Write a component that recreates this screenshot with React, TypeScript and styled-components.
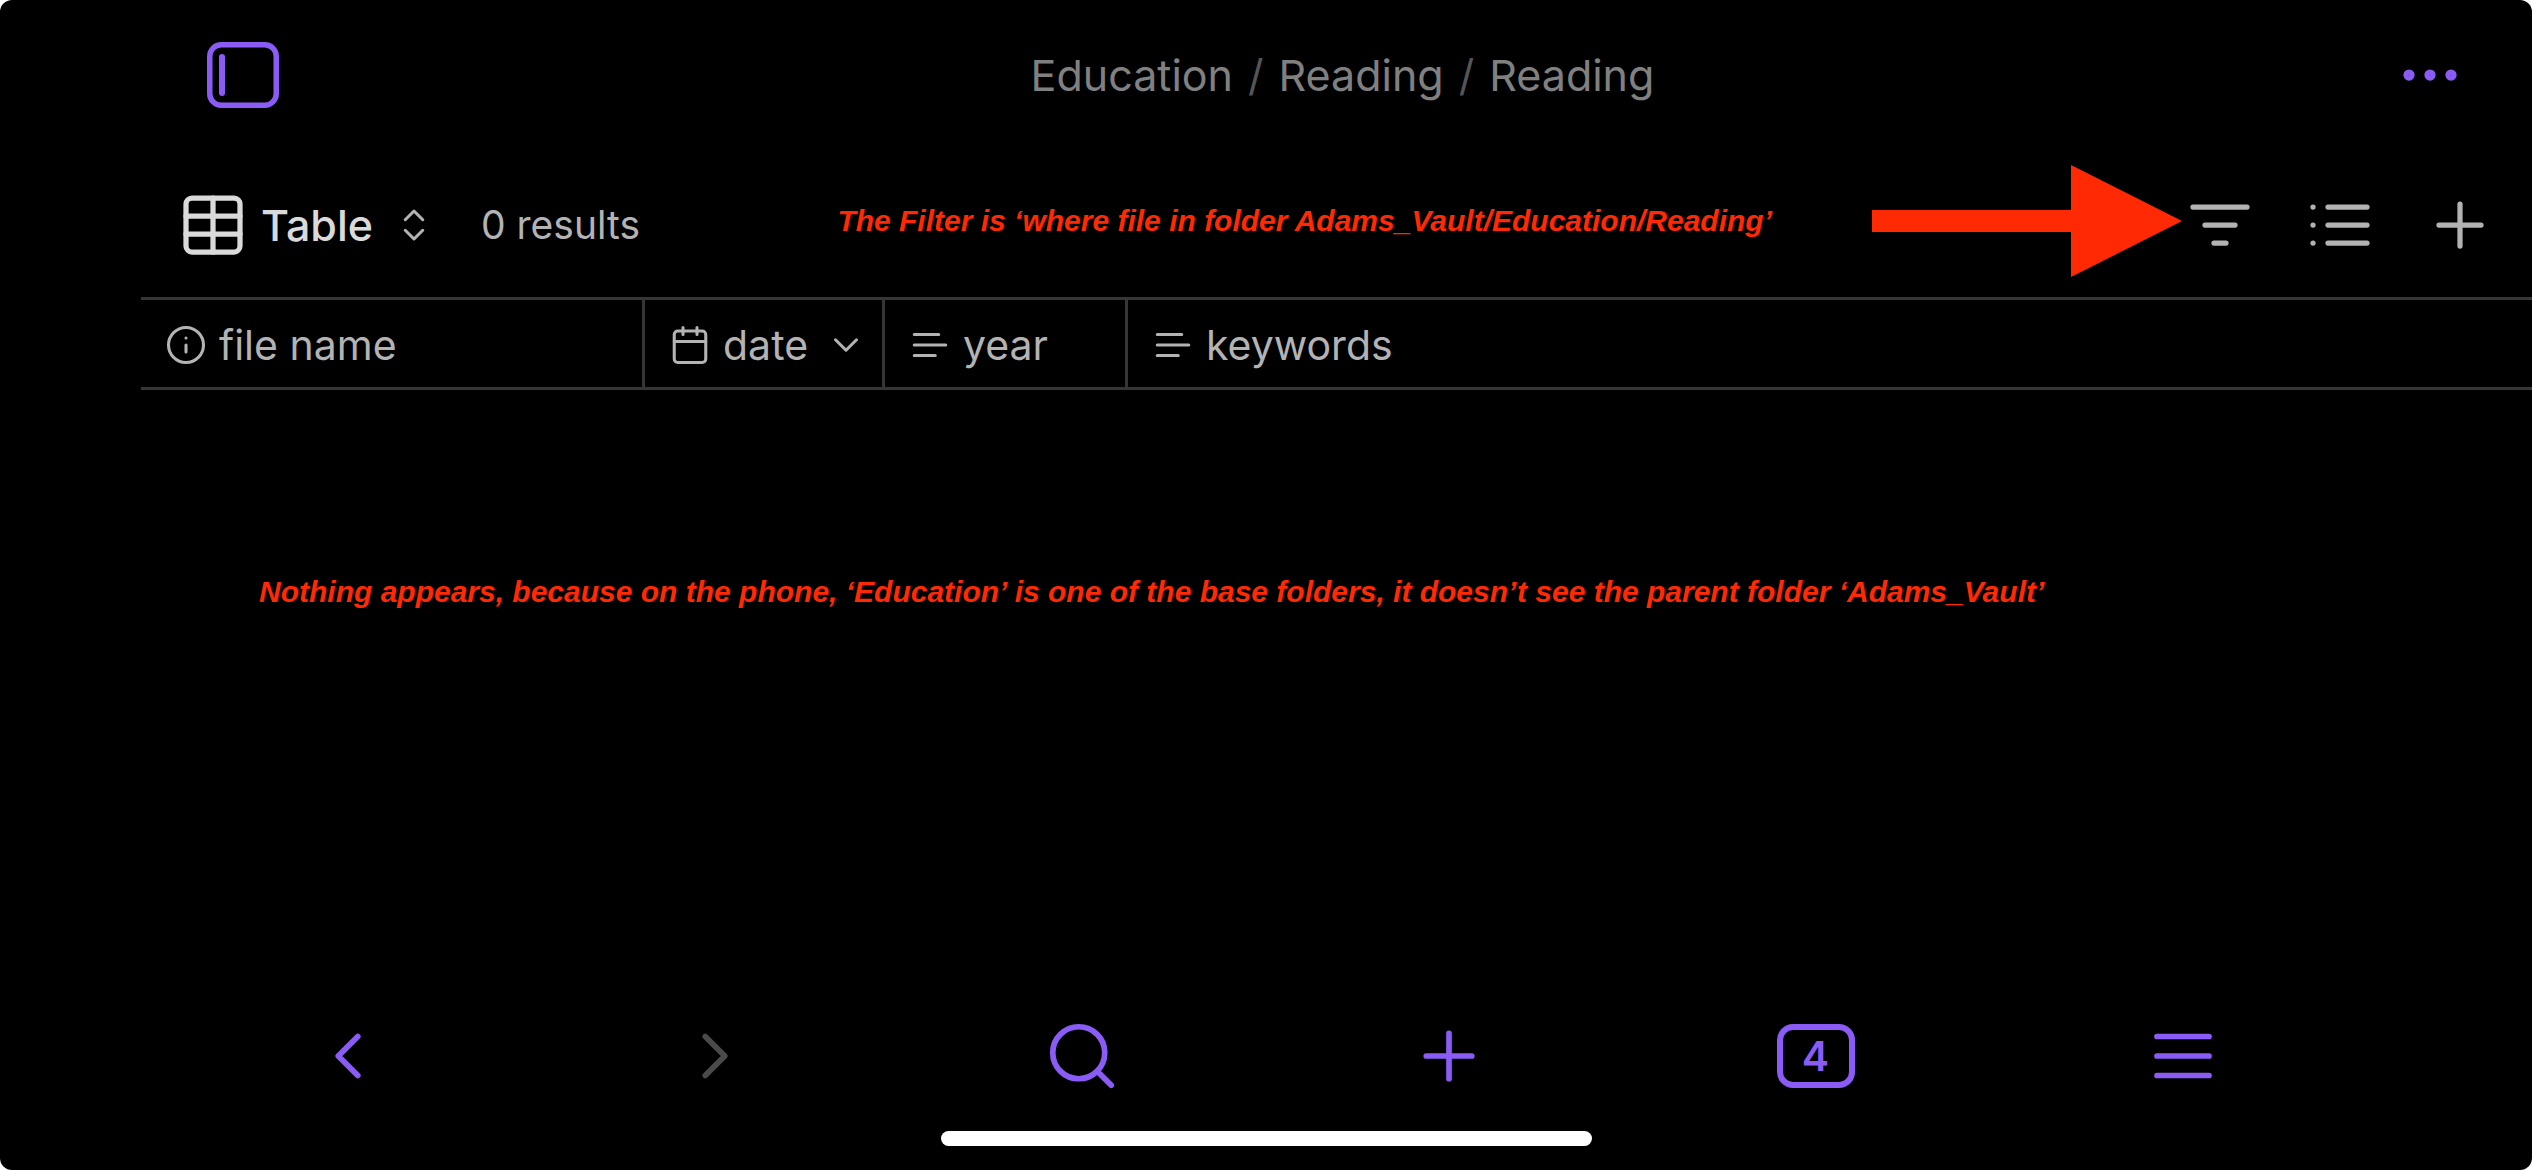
import React from "react";
import styled, { createGlobalStyle } from "styled-components";

const color = {
  background: "#000000",
  accent: "#8a5cf5",
  text: "#dadada",
  muted: "#b3b3b3",
  crumb: "#808080",
  separator: "#555555",
  disabled: "#4a4a4a",
  border: "#363636",
  note: "#ff2903",
};

const GlobalStyle = createGlobalStyle`
  body {
    margin: 0;
    background: #ffffff;
  }
  *, *::before, *::after {
    box-sizing: border-box;
  }
`;

const Screen = styled.div`
  display: flex;
  flex-direction: column;
  min-height: 100vh;
  overflow: hidden;
  border-radius: 12px;
  background: ${color.background};
  color: ${color.muted};
  font-family: Inter, "Liberation Sans", sans-serif;
`;

const TopBar = styled.header`
  display: flex;
  align-items: center;
  justify-content: space-between;
  padding: 39px 66px 42px 207px;
`;

const Button = styled.button<{ $color?: string }>`
  display: flex;
  align-items: center;
  padding: 0;
  border: 0;
  background: none;
  color: ${(p) => p.$color ?? color.muted};
  font: inherit;
`;

const SidebarButton = styled(Button)`
  padding-right: 12px;
`;

const Breadcrumb = styled.nav`
  display: flex;
  gap: 15px;
  font-size: 43px;
  line-height: 54px;
  color: ${color.crumb};
`;

const Crumb = styled.a`
  color: inherit;
  text-decoration: none;
`;

const Separator = styled.span`
  color: ${color.separator};
`;

const Svg = styled.svg<{ $size: number }>`
  display: block;
  flex: none;
  width: ${(p) => p.$size}px;
  height: ${(p) => p.$size}px;
  fill: none;
  stroke: currentColor;
  stroke-width: 1.75;
  stroke-linecap: round;
  stroke-linejoin: round;
`;

const Content = styled.main`
  flex: 1;
  padding-left: 141px;
`;

const Toolbar = styled.div`
  display: flex;
  align-items: center;
  height: 144px;
  padding: 0 36px;
`;

const ViewButton = styled(Button)`
  gap: 12px;
  font-size: 43px;
  font-weight: 500;
  line-height: 54px;
`;

const ViewArrows = styled.span`
  padding-left: 8px;
  color: ${color.muted};
`;

const Results = styled.span`
  padding-left: 46px;
  font-size: 39px;
  line-height: 54px;
  white-space: nowrap;
`;

const Note = styled.p`
  margin: 0;
  color: ${color.note};
  font: italic bold 30px/36px "Liberation Sans", Arial, sans-serif;
  white-space: nowrap;
`;

const FilterNote = styled.div`
  display: flex;
  align-items: center;
  gap: 100px;
  margin-left: auto;
  padding: 0 2px 8px 0;
`;

const Arrow = styled.svg`
  display: block;
  width: 310px;
  height: 112px;
  fill: ${color.note};
`;

const Actions = styled.div`
  display: flex;
  gap: 48px;
`;

const Table = styled.table`
  width: 100%;
  table-layout: fixed;
  border-spacing: 0;
`;

const HeaderCell = styled.th<{ $width?: number }>`
  width: ${(p) => (p.$width ? `${p.$width}px` : "auto")};
  height: 93px;
  padding: 2px 15px 0 24px;
  border: solid ${color.border};
  border-width: 3px 3px 3px 0;
  font-size: 41px;
  font-weight: 400;
  line-height: 54px;
  text-align: left;

  &:last-child {
    border-right: 0;
  }
`;

const CellLabel = styled.div`
  display: flex;
  align-items: center;
  gap: 12px;
`;

const SortButton = styled(Button)`
  margin-left: auto;
`;

const EmptyState = styled.div`
  padding: 184px 0 0 118px;
`;

const BottomBar = styled.footer`
  display: flex;
  flex-direction: column;
  align-items: center;
  gap: 36px;
  padding-bottom: 24px;
`;

const BottomNav = styled.nav`
  display: grid;
  grid-template-columns: repeat(6, 1fr);
  justify-items: center;
  align-items: center;
  align-self: stretch;
  padding: 0 166px 0 164px;
`;

const TabCount = styled(Button)`
  justify-content: center;
  width: 78px;
  height: 64px;
  border: 6px solid ${color.accent};
  border-radius: 16px;
  font-size: 41px;
  font-weight: 600;
  line-height: 52px;
`;

const HomeIndicator = styled.div`
  width: 651px;
  max-width: 60%;
  height: 15px;
  border-radius: 8px;
  background: #ffffff;
`;

const paths = {
  more: (
    <>
      <circle cx="5" cy="12" r="1" />
      <circle cx="12" cy="12" r="1" />
      <circle cx="19" cy="12" r="1" />
    </>
  ),
  table: (
    <>
      <rect x="3" y="3" width="18" height="18" rx="2" />
      <path d="M12 3v18M3 9h18M3 15h18" />
    </>
  ),
  upDown: <path d="m7 15 5 5 5-5M7 9l5-5 5 5" />,
  filter: <path d="M3 6h18M7 12h10M10 18h4" />,
  list: <path d="M8 6h13M8 12h13M8 18h13M3 6h.01M3 12h.01M3 18h.01" />,
  plus: <path d="M5 12h14M12 5v14" />,
  info: (
    <>
      <circle cx="12" cy="12" r="10" />
      <path d="M12 16v-4M12 8h.01" />
    </>
  ),
  calendar: (
    <>
      <rect x="3" y="4" width="18" height="18" rx="2" />
      <path d="M16 2v4M8 2v4M3 10h18" />
    </>
  ),
  down: <path d="m6 9 6 6 6-6" />,
  text: <path d="M17 6H3M21 12H3M15 18H3" />,
  left: <path d="m15 18-6-6 6-6" />,
  right: <path d="m9 18 6-6-6-6" />,
  search: (
    <>
      <circle cx="11" cy="11" r="8" />
      <path d="m21 21-4.3-4.3" />
    </>
  ),
  menu: <path d="M4 6h16M4 12h16M4 18h16" />,
};

type IconName = keyof typeof paths;

function Icon({ name, size }: { name: IconName; size: number }) {
  return (
    <Svg $size={size} viewBox="0 0 24 24" aria-hidden="true">
      {paths[name]}
    </Svg>
  );
}

function SidebarIcon() {
  return (
    <svg width="72" height="66" viewBox="0 0 72 66" fill="none" stroke="currentColor" strokeLinecap="round" aria-hidden="true">
      <rect x="2.75" y="2.75" width="66.5" height="60.5" rx="11.5" strokeWidth="5.5" />
      <path d="M15 15v36" strokeWidth="6" />
    </svg>
  );
}

const columns: { label: string; icon: IconName; width?: number; sorted?: boolean }[] = [
  { label: "file name", icon: "info", width: 504 },
  { label: "date", icon: "calendar", width: 240, sorted: true },
  { label: "year", icon: "text", width: 243 },
  { label: "keywords", icon: "text" },
];

const actions: { label: string; icon: IconName }[] = [
  { label: "Filter", icon: "filter" },
  { label: "Properties", icon: "list" },
  { label: "New", icon: "plus" },
];

export default function App() {
  return (
    <>
      <GlobalStyle />
      <Screen>
        <TopBar>
          <SidebarButton $color={color.accent} aria-label="Toggle sidebar">
            <SidebarIcon />
          </SidebarButton>
          <Breadcrumb aria-label="Breadcrumb">
            <Crumb href="#education">Education</Crumb>
            <Separator>/</Separator>
            <Crumb href="#reading">Reading</Crumb>
            <Separator>/</Separator>
            <Crumb href="#base">Reading</Crumb>
          </Breadcrumb>
          <Button $color={color.accent} aria-label="More options">
            <Icon name="more" size={72} />
          </Button>
        </TopBar>

        <Content>
          <Toolbar>
            <ViewButton $color={color.text}>
              <Icon name="table" size={72} />
              Table
              <ViewArrows>
                <Icon name="upDown" size={42} />
              </ViewArrows>
            </ViewButton>
            <Results>0 results</Results>
            <FilterNote>
              <Note>The Filter is ‘where file in folder Adams_Vault/Education/Reading’</Note>
              <Arrow viewBox="0 0 310 112" aria-hidden="true">
                <path d="M0 45h199V0l111 56-111 56V67H0z" />
              </Arrow>
            </FilterNote>
            <Actions>
              {actions.map((a) => (
                <Button key={a.label} aria-label={a.label}>
                  <Icon name={a.icon} size={72} />
                </Button>
              ))}
            </Actions>
          </Toolbar>

          <Table>
            <thead>
              <tr>
                {columns.map((c) => (
                  <HeaderCell key={c.label} $width={c.width} scope="col">
                    <CellLabel>
                      <Icon name={c.icon} size={42} />
                      {c.label}
                      {c.sorted && (
                        <SortButton aria-label={`Sort by ${c.label}`}>
                          <Icon name="down" size={42} />
                        </SortButton>
                      )}
                    </CellLabel>
                  </HeaderCell>
                ))}
              </tr>
            </thead>
          </Table>

          <EmptyState>
            <Note>
              Nothing appears, because on the phone, ‘Education’ is one of the base folders, it doesn’t see the parent folder ‘Adams_Vault’
            </Note>
          </EmptyState>
        </Content>

        <BottomBar>
          <BottomNav aria-label="Navigation">
            <Button $color={color.accent} aria-label="Back">
              <Icon name="left" size={78} />
            </Button>
            <Button $color={color.disabled} aria-label="Forward" disabled>
              <Icon name="right" size={78} />
            </Button>
            <Button $color={color.accent} aria-label="Search">
              <Icon name="search" size={78} />
            </Button>
            <Button $color={color.accent} aria-label="New tab">
              <Icon name="plus" size={78} />
            </Button>
            <TabCount $color={color.accent}>4</TabCount>
            <Button $color={color.accent} aria-label="Menu">
              <Icon name="menu" size={78} />
            </Button>
          </BottomNav>
          <HomeIndicator />
        </BottomBar>
      </Screen>
    </>
  );
}
